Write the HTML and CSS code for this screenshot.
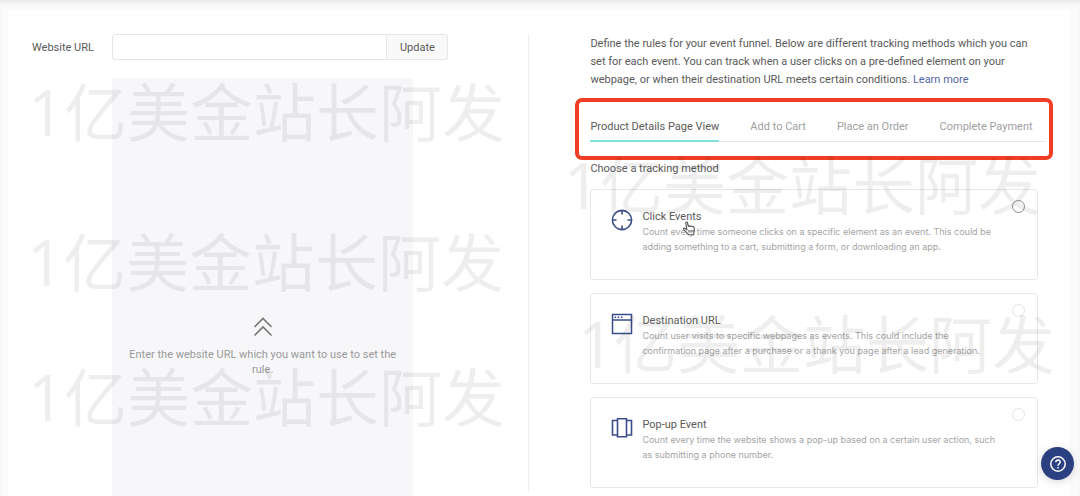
FILE: index.html
```html
<!DOCTYPE html>
<html lang="en">
<head>
  <meta charset="UTF-8">
  <meta name="viewport" content="width=device-width, initial-scale=1.0">
  <title>Event Rules</title>
  <link rel="stylesheet" href="styles.css">
</head>
<body>
  <main class="panel">
    <section class="site">
      <label class="site-label" for="url">Website URL</label>
      <div class="url-group">
        <input type="text" id="url">
        <button type="button" class="update">Update</button>
      </div>
      <div class="preview">
        <svg width="20" height="20" viewBox="0 0 20 20" fill="none" stroke="#777" stroke-width="1.6">
          <path d="M1.5 10 10 1.5l8.500 8.500M1.500 18.500 10 10l8.500 8.500"/>
        </svg>
        <p>Enter the website URL which you want to use to set the rule.</p>
      </div>
    </section>

    <section class="rules">
      <p class="intro">Define the rules for your event funnel. Below are different tracking methods which you can set for each event. You can track when a user clicks on a pre-defined element on your webpage, or when their destination URL meets certain conditions. <a href="#">Learn more</a></p>

      <div class="tabs">
        <button type="button" class="tab active">Product Details Page View</button>
        <button type="button" class="tab">Add to Cart</button>
        <button type="button" class="tab">Place an Order</button>
        <button type="button" class="tab">Complete Payment</button>
      </div>

      <h2>Choose a tracking method</h2>

      <div class="methods">
        <label class="card hovered" for="click">
          <svg width="22" height="22" viewBox="0 0 22 22" fill="none" stroke="#3b4d8a" stroke-width="1.600">
            <circle cx="11" cy="11" r="9.600"/>
            <path d="M11 1v4.500M11 16.500V21M1 11h4.500M16.500 11H21"/>
          </svg>
          <span class="card-text">
            <span class="card-title">Click Events</span>
            <span class="card-desc">Count every time someone clicks on a specific element as an event. This could be adding something to a cart, submitting a form, or downloading an app.</span>
          </span>
          <input type="radio" name="method" id="click">
          <svg class="pointer" width="14" height="15" viewBox="0 0 14 15" fill="#fff" stroke="#555" stroke-width="1.100" stroke-linejoin="round">
            <path d="M5 9 3.800 2.200c-.2-1.300 1.400-1.600 1.700-.4l.9 3.700c.3-.9 1.700-.9 2 0 .4-.7 1.600-.6 1.800.2.600-.5 1.700-.2 1.800.7l.4 3.200c.1 1.500-.8 2.100-.7 4.200H6.500C5.800 12 3 10.500 1.600 8.500.9 7.300 2.300 6.600 3.200 7.500z"/>
            <path d="M7 9v2.500M9 9v2.500M11 9v2.500"/>
          </svg>
        </label>

        <label class="card" for="destination">
          <svg width="22" height="22" viewBox="0 0 22 22" fill="none" stroke="#3b4d8a" stroke-width="1.500">
            <path d="M1.500 1.500h19v19h-19zM1.500 7h19"/>
            <path d="M3.500 4.300h1.600M6.700 4.300h1.600M9.900 4.300h1.600"/>
          </svg>
          <span class="card-text">
            <span class="card-title">Destination URL</span>
            <span class="card-desc">Count user visits to specific webpages as events. This could include the confirmation page after a purchase or a thank you page after a lead generation.</span>
          </span>
          <input type="radio" name="method" id="destination">
        </label>

        <label class="card" for="popup">
          <svg width="22" height="22" viewBox="0 0 22 22" fill="none" stroke="#3b4d8a" stroke-width="1.600">
            <path d="M6.500 1.700h9v18h-9zM6.500 3.500h-5v14.500h5M15.500 3.500h5v14.500h-5"/>
          </svg>
          <span class="card-text">
            <span class="card-title">Pop-up Event</span>
            <span class="card-desc">Count every time the website shows a pop-up based on a certain user action, such as submitting a phone number.</span>
          </span>
          <input type="radio" name="method" id="popup">
        </label>
      </div>
    </section>
  </main>

  <button type="button" class="help" aria-label="Help">
    <svg width="18" height="18" viewBox="0 0 18 18" fill="none" stroke="#fff" stroke-width="1.500">
      <circle cx="9" cy="9" r="7.200"/>
      <path d="M6.800 7.300C6.900 4.300 11.300 4.400 11.200 7.200 11.100 8.800 9 8.800 9 10.700M9 12v1.500"/>
    </svg>
  </button>

  <div class="watermark wm-1">1亿美金站长阿发</div>
  <div class="watermark wm-2">1亿美金站长阿发</div>
  <div class="watermark wm-3">1亿美金站长阿发</div>
  <div class="watermark wm-4">1亿美金站长阿发</div>
  <div class="watermark wm-5">1亿美金站长阿发</div>
</body>
</html>
```

FILE: styles.css
```css
* {
  box-sizing: border-box;
}
body {
  margin: 0;
  padding: 10px 10px 0 8px;
  min-height: 100vh;
  position: relative;
  display: flex;
  background: #fafafa;
  box-shadow: inset 0 4px 4px -2px #e4e4e4;
  font-family: Roboto, "Liberation Sans", sans-serif;
  font-size: 11px;
  color: #5a5a5a;
}
button,
input {
  font: inherit;
  color: inherit;
}
.panel {
  flex: 1;
  display: grid;
  grid-template-columns: minmax(0, 49fr) minmax(0, 51fr);
  background: #fff;
}

/* left side */
.site {
  display: grid;
  grid-template-columns: 80px 1fr;
  grid-template-rows: 26px 1fr;
  row-gap: 18px;
  padding: 24px 0 0 24px;
}
.site-label {
  align-self: center;
}
.url-group {
  display: flex;
  margin-right: 80px;
}
.url-group input {
  flex: 1;
  min-width: 0;
  padding: 0 8px;
  border: 1px solid #e6e6e8;
  border-radius: 3px 0 0 3px;
}
.update {
  width: 61px;
  padding: 0;
  border: 1px solid #e6e6e8;
  border-left: 0;
  border-radius: 0 3px 3px 0;
  background: #f9f9f9;
}
.preview {
  grid-column: 2;
  margin-right: 115px;
  padding: 0 12px 119px;
  display: flex;
  flex-direction: column;
  align-items: center;
  justify-content: flex-end;
  border-radius: 3px 3px 0 0;
  background: #f7f7f9;
  color: #999;
  text-align: center;
  line-height: 15px;
}
.preview p {
  margin: 10px 0 0;
}

/* right side */
.rules {
  margin: 24px 0 5px;
  padding: 1px 32px 2px 61px;
  border-left: 1px solid #eee;
}
.intro {
  margin: 0;
  line-height: 18px;
}
.intro a {
  color: #5468a8;
  text-decoration: none;
}
.tabs {
  position: relative;
  display: flex;
  gap: 31px;
  margin: 30px -8px 0 0;
  border-bottom: 1px solid #e6e6e8;
}
.tabs::after {
  content: "";
  position: absolute;
  inset: -21px -7px -19px -15px;
  border: 4px solid #ef3e23;
  border-radius: 7px;
  pointer-events: none;
}
.tab {
  margin-bottom: -1px;
  padding: 0 0 5px;
  border: 0;
  border-bottom: 2px solid transparent;
  background: none;
  line-height: 16px;
  color: #a0a0a0;
  white-space: nowrap;
}
.tab.active {
  border-color: #7fe3da;
  color: #5a5a5a;
}
h2 {
  margin: 19px 0 12px;
  font-size: 11px;
  font-weight: 400;
  line-height: 16px;
}
.methods {
  display: grid;
  gap: 13px;
}
.card {
  position: relative;
  display: flex;
  align-items: flex-start;
  gap: 9px;
  min-height: 91px;
  padding: 19px 12px 0 20px;
  border: 1px solid #e8e8ea;
  border-radius: 3px;
}
.card > svg {
  flex: none;
}
.card-text {
  flex: 1;
  padding-right: 3px;
}
.card-title {
  display: block;
  line-height: 15px;
}
.card-desc {
  display: block;
  font-family: Inter, "Liberation Sans", sans-serif;
  font-size: 9px;
  line-height: 15px;
  color: #a4a4a4;
}
.card input {
  appearance: none;
  flex: none;
  width: 13px;
  height: 13px;
  margin: -9px 0 0;
  border: 1px solid #e2e2e4;
  border-radius: 50%;
}
.card.hovered input {
  border-color: #8e8e98;
}
.card .pointer {
  position: absolute;
  left: 91px;
  top: 31px;
}
.help {
  position: fixed;
  right: 6px;
  bottom: 16px;
  width: 33px;
  height: 33px;
  padding: 0;
  display: grid;
  place-items: center;
  border: 0;
  border-radius: 50%;
  background: #2a4080;
  box-shadow: 0 2px 8px rgba(0, 0, 0, .15);
}

/* watermarks lie over everything */
.watermark {
  position: absolute;
  font-family: "Noto Sans", "Noto Sans CJK SC", sans-serif;
  font-size: 63px;
  line-height: 64px;
  white-space: nowrap;
  color: rgba(0, 0, 0, .065);
  pointer-events: none;
}
.wm-1 {
  left: 28px;
  top: 80px;
}
.wm-2 {
  left: 27px;
  top: 230px;
}
.wm-3 {
  left: 28px;
  top: 365px;
}
.wm-4 {
  left: 564px;
  top: 153px;
}
.wm-5 {
  left: 578px;
  top: 312px;
}
```
